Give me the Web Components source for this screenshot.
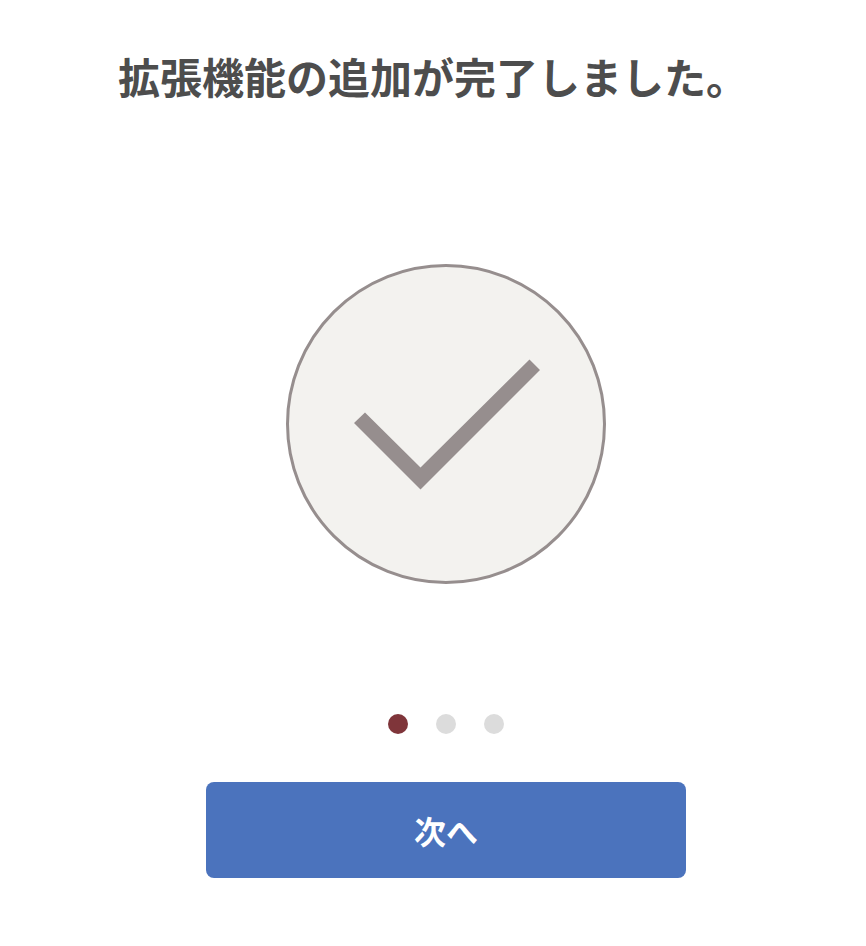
<!DOCTYPE html>
<html lang="ja">
<head>
<meta charset="utf-8">
<title>拡張機能の追加が完了しました。</title>
<style>
  html, body { margin: 0; background: #fff; }
  body { font-family: "Noto Sans CJK JP", "Noto Sans", sans-serif; }
</style>
</head>
<body>
<setup-page>
  <span slot="title">拡張機能の追加が完了しました。</span>
  <done-mark slot="figure"></done-mark>
  <step-dots slot="dots" count="3" active="0"></step-dots>
  <next-button slot="action">次へ</next-button>
</setup-page>

<script>
class SetupPage extends HTMLElement {
  constructor() {
    super();
    this.attachShadow({ mode: "open" });
    this.shadowRoot.innerHTML = `
      <style>
        :host {
          display: block;
          width: 866px;
          height: 946px;
          overflow: hidden;
        }
        h1 {
          margin: 0;
          padding-top: 46px;
          height: 60px;
          text-align: center;
          font-size: 42px;
          line-height: 60px;
          font-weight: 700;
          color: #4d4d4d;
        }
        .column {
          display: flex;
          flex-direction: column;
          align-items: center;
          padding-left: 26px;
          padding-top: 158px;
        }
        .dots { margin-top: 130px; }
        .action { margin-top: 48px; }
      </style>
      <h1><slot name="title"></slot></h1>
      <div class="column">
        <slot name="figure"></slot>
        <div class="dots"><slot name="dots"></slot></div>
        <div class="action"><slot name="action"></slot></div>
      </div>
    `;
  }
}

class DoneMark extends HTMLElement {
  constructor() {
    super();
    this.attachShadow({ mode: "open" });
    this.shadowRoot.innerHTML = `
      <style>
        :host { display: block; width: 320px; height: 320px; }
        svg { display: block; }
      </style>
      <svg width="320" height="320" viewBox="0 0 320 320">
        <circle cx="160" cy="160" r="158.5" fill="#f3f2ef" stroke="#968e8e" stroke-width="3"/>
        <polygon fill="#968e8e" points="243.5,95.5 254,106 134.5,225.5 68,159 79,148.5 134.5,203.5"/>
      </svg>
    `;
  }
}

class StepDots extends HTMLElement {
  constructor() {
    super();
    this.attachShadow({ mode: "open" });
    this.shadowRoot.innerHTML = `
      <style>
        :host { display: flex; gap: 28px; }
        span { width: 20px; height: 20px; border-radius: 50%; background: #dcdcdc; }
        span.on { background: #7f353a; }
      </style>
    `;
  }

  connectedCallback() {
    const count = Number(this.getAttribute("count")) || 0;
    const active = Number(this.getAttribute("active")) || 0;
    for (let i = 0; i < count; i++) {
      const dot = document.createElement("span");
      if (i === active) dot.className = "on";
      this.shadowRoot.appendChild(dot);
    }
  }
}

class NextButton extends HTMLElement {
  constructor() {
    super();
    this.attachShadow({ mode: "open" });
    this.shadowRoot.innerHTML = `
      <style>
        :host { display: block; }
        button {
          display: block;
          width: 480px;
          height: 96px;
          padding: 0;
          border: 0;
          border-radius: 8px;
          background: #4b73bd;
          color: #fff;
          font: 700 32px "Noto Sans CJK JP", "Noto Sans", sans-serif;
        }
      </style>
      <button type="button"><slot></slot></button>
    `;
  }
}

customElements.define("setup-page", SetupPage);
customElements.define("done-mark", DoneMark);
customElements.define("step-dots", StepDots);
customElements.define("next-button", NextButton);
</script>
</body>
</html>
